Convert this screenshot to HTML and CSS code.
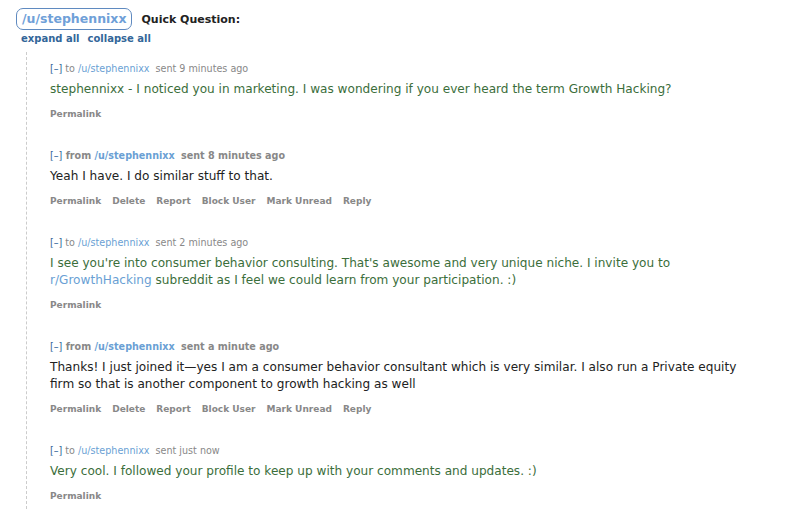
FILE: index.html
```html
<!DOCTYPE html>
<html lang="en">
  <head>
    <meta charset="UTF-8" />
    <meta name="viewport" content="width=device-width, initial-scale=1.0" />
    <title>Quick Question</title>
    <link rel="stylesheet" href="styles.css">
  </head>
  <body>
    <div class="thread-head">
      <a class="user-pill" href="#">/u/stephennixx</a>
      <span class="subject">Quick Question:</span>
    </div>
    <div class="toggles">
      <a href="#">expand all</a>
      <a href="#">collapse all</a>
    </div>

    <div class="thread">
      <div class="message sent">
        <p class="tagline"><a class="expand" href="#">[–]</a> to <a class="author" href="#">/u/stephennixx</a> <span class="time">sent 9 minutes ago</span></p>
        <div class="md">stephennixx - I noticed you in marketing. I was wondering if you ever heard the term Growth Hacking?</div>
        <ul class="buttons">
          <li><a href="#">Permalink</a></li>
        </ul>
      </div>

      <div class="message received">
        <p class="tagline"><a class="expand" href="#">[–]</a> from <a class="author" href="#">/u/stephennixx</a> <span class="time">sent 8 minutes ago</span></p>
        <div class="md">Yeah I have. I do similar stuff to that.</div>
        <ul class="buttons">
          <li><a href="#">Permalink</a></li>
          <li><a href="#">Delete</a></li>
          <li><a href="#">Report</a></li>
          <li><a href="#">Block User</a></li>
          <li><a href="#">Mark Unread</a></li>
          <li><a href="#">Reply</a></li>
        </ul>
      </div>

      <div class="message sent">
        <p class="tagline"><a class="expand" href="#">[–]</a> to <a class="author" href="#">/u/stephennixx</a> <span class="time">sent 2 minutes ago</span></p>
        <div class="md">I see you're into consumer behavior consulting. That's awesome and very unique niche. I invite you to <a href="#">r/GrowthHacking</a> subreddit as I feel we could learn from your participation. :)</div>
        <ul class="buttons">
          <li><a href="#">Permalink</a></li>
        </ul>
      </div>

      <div class="message received">
        <p class="tagline"><a class="expand" href="#">[–]</a> from <a class="author" href="#">/u/stephennixx</a> <span class="time">sent a minute ago</span></p>
        <div class="md">Thanks! I just joined it—yes I am a consumer behavior consultant which is very similar. I also run a Private equity firm so that is another component to growth hacking as well</div>
        <ul class="buttons">
          <li><a href="#">Permalink</a></li>
          <li><a href="#">Delete</a></li>
          <li><a href="#">Report</a></li>
          <li><a href="#">Block User</a></li>
          <li><a href="#">Mark Unread</a></li>
          <li><a href="#">Reply</a></li>
        </ul>
      </div>

      <div class="message sent">
        <p class="tagline"><a class="expand" href="#">[–]</a> to <a class="author" href="#">/u/stephennixx</a> <span class="time">sent just now</span></p>
        <div class="md">Very cool. I followed your profile to keep up with your comments and updates. :)</div>
        <ul class="buttons">
          <li><a href="#">Permalink</a></li>
        </ul>
      </div>
    </div>
  </body>
</html>
```

FILE: styles.css
```css
body {
  font-family: "DejaVu Sans", Verdana, sans-serif;
  margin: 0;
  padding: 8px 0 0 16px;
  background-color: #fff;
  color: #222;
}
a {
  text-decoration: none;
}
.thread-head {
  display: flex;
  align-items: center;
  gap: 9px;
}
.user-pill {
  font-size: 12.5px;
  font-weight: bold;
  color: #6fa0d8;
  border: 1px solid #5f8ac0;
  border-radius: 7px;
  padding: 2px 5px 3px;
  line-height: 15px;
}
.subject {
  font-size: 11px;
  font-weight: bold;
  color: #222;
}
.toggles {
  margin: 3px 0 0 5px;
  display: flex;
  gap: 8px;
  font-size: 10px;
  font-weight: bold;
}
.toggles a {
  color: #336699;
}
.thread {
  margin: 8px 0 0 10px;
  border-left: 1px dashed #ccc;
  padding: 9px 0 0 23px;
}
.message {
  padding-top: 2px;
  padding-bottom: 27px;
}
.message:last-child {
  padding-bottom: 6px;
}
.tagline {
  margin: 0;
  font-size: 9.6px;
  line-height: 12px;
  color: #888;
}
.received .tagline {
  font-weight: bold;
}
.expand {
  color: #369;
  font-weight: normal;
}
.author {
  color: #6a9fd4;
  margin-right: 3px;
}
.md {
  margin-top: 6px;
  font-size: 12.1px;
  line-height: 17px;
  max-width: 700px;
}
.sent .md {
  color: #3b6e3b;
}
.md a {
  color: #6a9fd4;
}
.buttons {
  list-style: none;
  margin: 9px 0 0;
  padding: 0;
  display: flex;
  gap: 11px;
  font-size: 9px;
  font-weight: bold;
  line-height: 14px;
}
.buttons a {
  color: #888;
}
```
